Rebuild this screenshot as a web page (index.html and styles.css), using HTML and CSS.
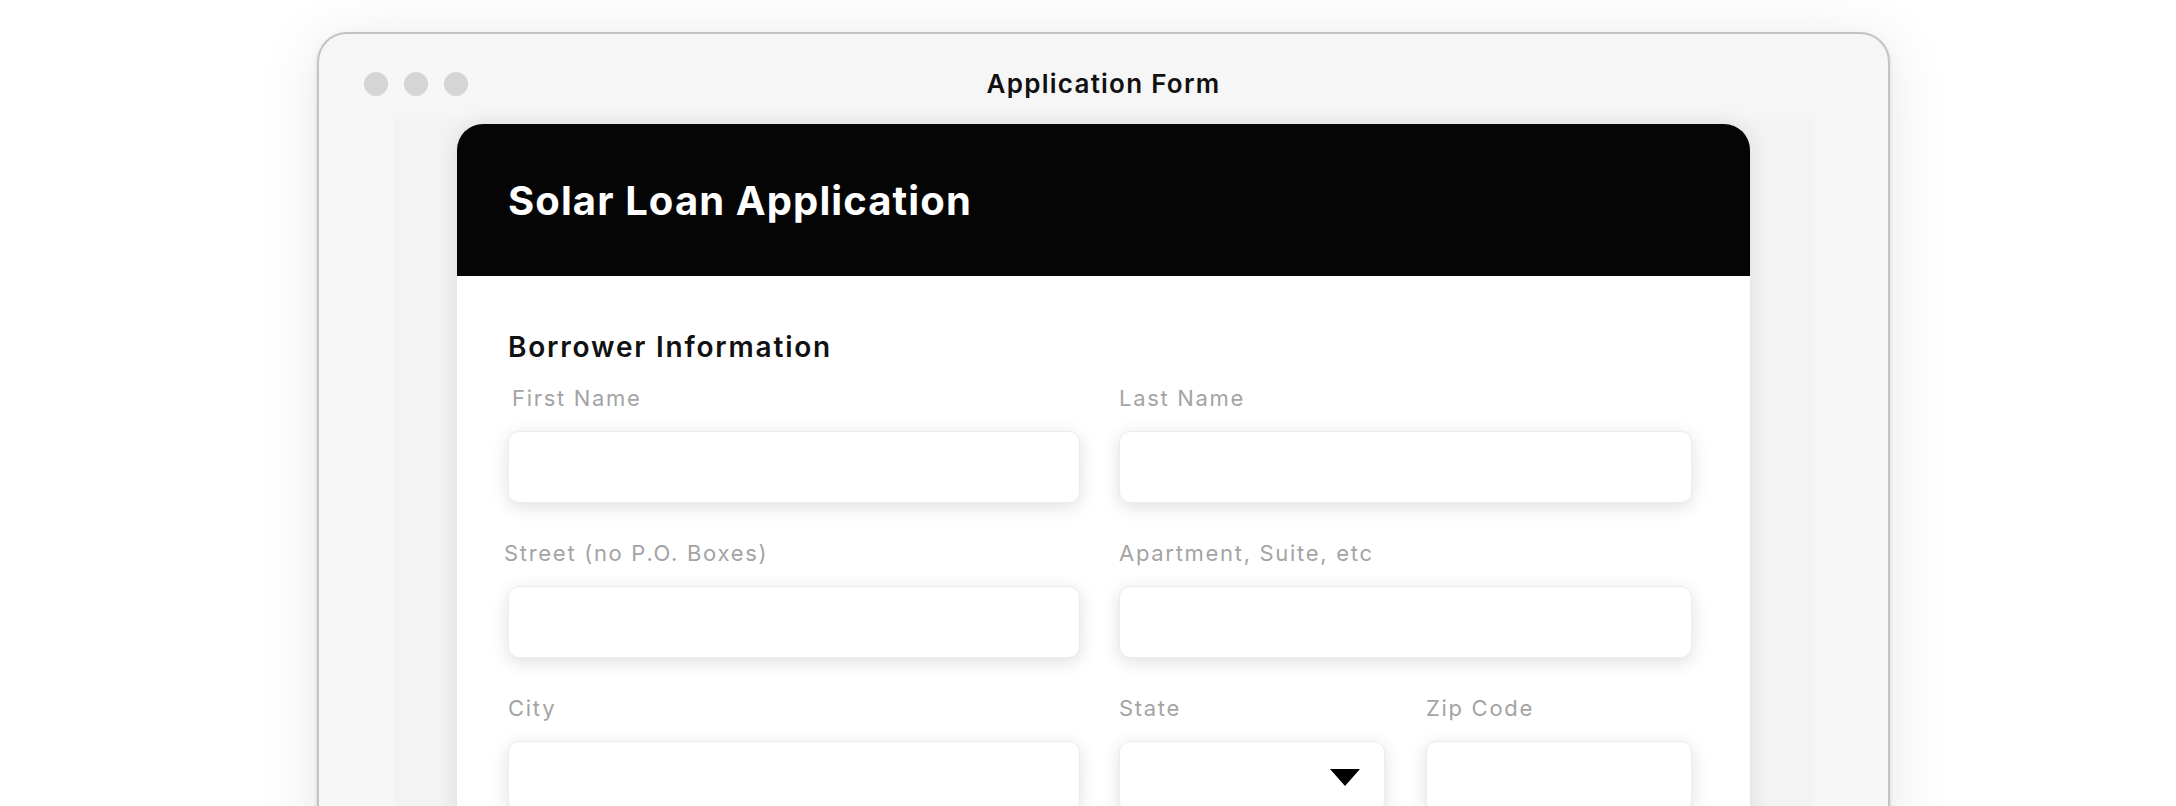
FILE: index.html
```html
<!DOCTYPE html>
<html>
<head>
  <meta charset="UTF-8">
  <title>Application Form</title>
  <link rel="stylesheet" href="styles.css">
</head>
<body>
  <div class="window">
    <div class="titlebar">
      <div class="dots">
        <span class="dot"></span>
        <span class="dot"></span>
        <span class="dot"></span>
      </div>
      <div class="window-title">Application Form</div>
      <div></div>
    </div>

    <div class="content">
      <div class="card">
        <div class="card-header">
          <h1>Solar Loan Application</h1>
        </div>

        <div class="card-body">
          <h2>Borrower Information</h2>

          <div class="row">
            <div class="cell">
              <label class="label nudge-right">First Name</label>
              <input type="text" class="field">
            </div>
            <div class="cell">
              <label class="label">Last Name</label>
              <input type="text" class="field">
            </div>
          </div>

          <div class="row">
            <div class="cell">
              <label class="label nudge-left">Street (no P.O. Boxes)</label>
              <input type="text" class="field">
            </div>
            <div class="cell">
              <label class="label">Apartment, Suite, etc</label>
              <input type="text" class="field">
            </div>
          </div>

          <div class="row">
            <div class="cell">
              <label class="label">City</label>
              <input type="text" class="field">
            </div>
            <div class="split">
              <div class="cell">
                <label class="label">State</label>
                <div class="field select">
                  <svg width="30" height="17" viewBox="0 0 30 17"><path d="M0 0 H30 L15 17 Z" fill="#000"/></svg>
                </div>
              </div>
              <div class="cell">
                <label class="label">Zip Code</label>
                <input type="text" class="field">
              </div>
            </div>
          </div>
        </div>
      </div>
    </div>
  </div>
</body>
</html>
```

FILE: styles.css
```css
    /* page */
    html, body {
      margin: 0;
      height: 100%;
      overflow: hidden;
    }
    body {
      background-color: #fff;
      font-family: 'Inter', 'Liberation Sans', sans-serif;
    }

    /* window frame */
    .window {
      box-sizing: border-box;
      width: 1573px;
      height: 1000px;
      margin: 32px 0 0 317px;
      background-color: #f6f6f6;
      border: 2px solid #c3c3c3;
      border-radius: 30px;
      box-shadow: 0 2px 4px rgba(0, 0, 0, 0.12), 0 8px 60px rgba(0, 0, 0, 0.1);
    }
    .titlebar {
      display: grid;
      grid-template-columns: 1fr auto 1fr;
      align-items: center;
      height: 71px;
      padding-top: 14px;
    }
    .dots {
      display: flex;
      gap: 16px;
      padding-left: 45px;
    }
    .dot {
      width: 24px;
      height: 24px;
      border-radius: 50%;
      background-color: #d5d5d5;
    }
    .window-title {
      font-size: 26px;
      font-weight: 600;
      letter-spacing: 1.25px;
      color: #111;
    }

    /* inner area */
    .content {
      height: 100%;
      margin: 0 75px;
      padding: 5px 63px 0;
      background-color: #f3f3f3;
    }
    .card {
      height: 100%;
      border-radius: 26px 26px 0 0;
      background-color: #fff;
      box-shadow: 0 0 22px rgba(0, 0, 0, 0.10);
      overflow: hidden;
    }
    .card-header {
      display: flex;
      align-items: center;
      height: 152px;
      padding-left: 51px;
      background-color: #050505;
    }
    .card-header h1 {
      margin: 0;
      font-size: 40px;
      font-weight: 700;
      letter-spacing: 1.1px;
      color: #fff;
    }
    .card-body {
      padding: 54px 58px 0 51px;
    }
    .card-body h2 {
      margin: 0 0 21px;
      font-size: 28px;
      line-height: 34px;
      font-weight: 600;
      letter-spacing: 1.8px;
      color: #111;
    }

    /* form rows */
    .row {
      display: grid;
      grid-template-columns: 572px 1fr;
      gap: 39px;
      margin-bottom: 37px;
    }
    .split {
      display: grid;
      grid-template-columns: 1fr 1fr;
      gap: 41px;
    }
    .cell {
      display: flex;
      flex-direction: column;
    }
    .label {
      margin-bottom: 20px;
      font-size: 22px;
      line-height: 26px;
      letter-spacing: 1.7px;
      color: #a4a4a4;
    }
    .nudge-right {
      margin-left: 4px;
    }
    .nudge-left {
      margin-left: -4px;
    }
    .field {
      box-sizing: border-box;
      height: 72px;
      width: 100%;
      border: 1px solid #ececec;
      border-radius: 11px;
      background-color: #fff;
      box-shadow: 0 4px 18px rgba(0, 0, 0, 0.13);
      outline: none;
    }
    .select {
      display: flex;
      align-items: center;
      justify-content: flex-end;
      padding-right: 24px;
    }
```
